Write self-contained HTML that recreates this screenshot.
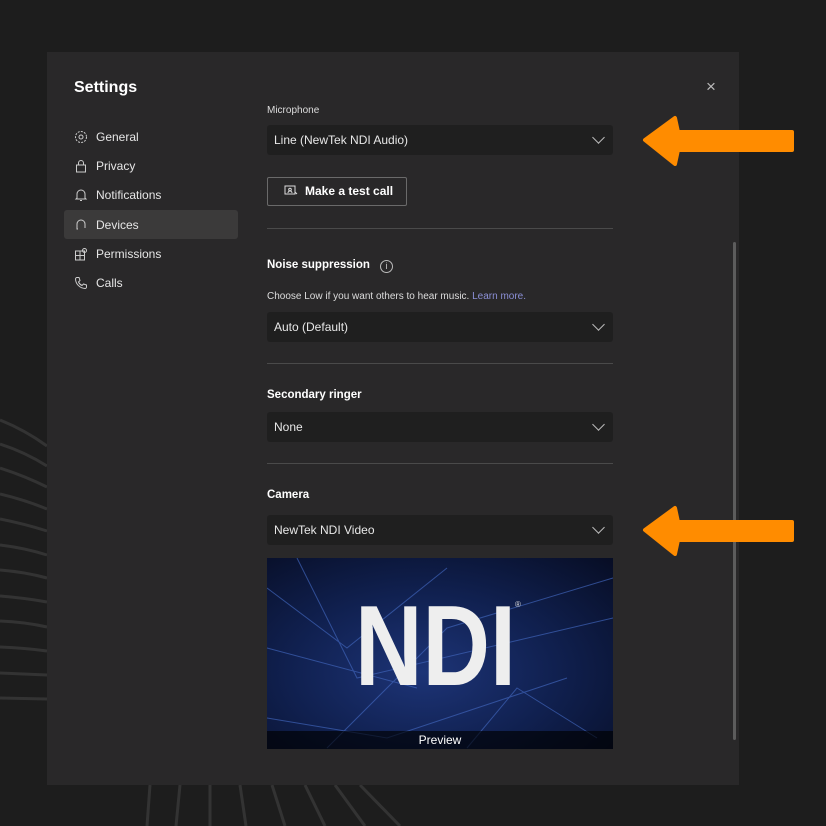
<!DOCTYPE html>
<html><head><meta charset="utf-8"><style>
*{margin:0;padding:0;box-sizing:border-box}
body{width:826px;height:826px;background:#1d1d1d;position:relative;overflow:hidden;font-family:"Liberation Sans",sans-serif;color:#fff}
.a{position:absolute}
#panel{left:47px;top:52px;width:692px;height:733px;background:#292829}
.nav{left:74px;font-size:12px;color:#e6e6e6;display:flex;align-items:center;gap:8px;height:29px}
.nav svg{width:14px;height:14px}
.dd{left:267px;width:346px;height:30px;background:#1f1f1f;border-radius:3px;font-size:12px;color:#e8e8e8;padding-left:7px;line-height:30px}
.dd:after{content:"";position:absolute;right:10px;top:8px;width:8px;height:8px;border-right:1px solid #bbb;border-bottom:1px solid #bbb;transform:rotate(45deg)}
.hr{left:267px;width:346px;height:1px;background:#4a4a4a}
.h{left:267px;font-size:11.5px;font-weight:bold;color:#fff}
</style></head><body>
<svg class="a" style="left:0;top:0" width="826" height="826">
<g stroke="#333" stroke-width="3" fill="none">
<path d="M0 420 Q25 430 47 446"/><path d="M0 444 Q25 452 47 466"/><path d="M0 468 Q25 476 47 487"/><path d="M0 494 Q25 500 47 509"/><path d="M0 519 Q25 524 47 531"/><path d="M0 545 Q25 548 47 555"/><path d="M0 570 Q25 572 47 578"/><path d="M0 596 Q25 598 47 602"/><path d="M0 621 Q25 622 47 627"/><path d="M0 647 Q25 648 47 651"/><path d="M0 673 L47 675"/><path d="M0 698 L47 699"/>
<path d="M150 785 L147 826"/><path d="M180 785 L176 826"/><path d="M210 785 L210 826"/><path d="M240 785 L246 826"/><path d="M272 785 L285 826"/><path d="M305 785 L325 826"/><path d="M335 785 L365 826"/><path d="M360 785 L400 826"/>
</g></svg>
<div class="a" id="panel"></div>
<div class="a" style="left:74px;top:79px;font-size:16px;font-weight:bold;color:#fff">Settings</div>
<div class="a" style="left:706px;top:77px;font-size:17px;color:#bbb">×</div>
<div class="a" style="left:64px;top:210px;width:174px;height:29px;background:#3b3a3a;border-radius:3px"></div>
<div class="a nav" style="top:122px"><svg viewBox="0 0 14 14" fill="none" stroke="#ccc"><circle cx="7" cy="7" r="2"/><circle cx="7" cy="7" r="5.5" stroke-dasharray="2 1.2"/></svg>General</div>
<div class="a nav" style="top:151px"><svg viewBox="0 0 14 14" fill="none" stroke="#ccc"><rect x="2.5" y="6" width="9" height="7"/><path d="M4.5 6V4a2.5 2.5 0 0 1 5 0v2"/></svg>Privacy</div>
<div class="a nav" style="top:180px"><svg viewBox="0 0 14 14" fill="none" stroke="#ccc"><path d="M3 10V6a4 4 0 0 1 8 0v4l1 1H2z M6 12.5h2"/></svg>Notifications</div>
<div class="a nav" style="top:210px"><svg viewBox="0 0 14 14" fill="none" stroke="#ccc"><path d="M3 9V6a4 4 0 0 1 8 0v3M3 8v3h1M11 8v2"/></svg>Devices</div>
<div class="a nav" style="top:239px"><svg viewBox="0 0 14 14" fill="none" stroke="#ccc"><rect x="1.5" y="4" width="9" height="9"/><path d="M6 4v9M1.5 8.5h9"/><circle cx="10.5" cy="3.5" r="2"/></svg>Permissions</div>
<div class="a nav" style="top:268px"><svg viewBox="0 0 14 14" fill="none" stroke="#ccc"><path d="M3 1.5l2 0 1 3-1.5 1.5a7 7 0 0 0 3.5 3.5L9.5 8l3 1v2a1.5 1.5 0 0 1-1.5 1.5A10 10 0 0 1 1.5 3 1.5 1.5 0 0 1 3 1.5z"/></svg>Calls</div>

<div class="a" style="left:267px;top:105px;font-size:10px;color:#ddd">Microphone</div>
<div class="a dd" style="top:125px">Line (NewTek NDI Audio)</div>
<div class="a" style="left:267px;top:177px;width:140px;height:29px;border:1px solid #6a6a6a;border-radius:2px;font-size:12px;font-weight:bold;line-height:27px;padding-left:37px">Make a test call</div>
<svg class="a" style="left:284px;top:185px" width="14" height="12" viewBox="0 0 14 12" fill="none" stroke="#ddd"><rect x="1" y="1" width="10" height="8"/><circle cx="6" cy="4.5" r="1.3"/><path d="M4 8a2 2 0 0 1 4 0M11 7l2 2"/></svg>
<div class="a hr" style="top:228px"></div>
<div class="a h" style="top:259px">Noise suppression</div>
<div class="a" style="left:380px;top:260px;width:13px;height:13px;border:1px solid #bbb;border-radius:50%;font-size:9px;text-align:center;line-height:11px;color:#ccc">i</div>
<div class="a" style="left:267px;top:291px;font-size:10px;color:#ddd">Choose Low if you want others to hear music. <span style="color:#8b8fd6">Learn more.</span></div>
<div class="a dd" style="top:312px">Auto (Default)</div>
<div class="a hr" style="top:363px"></div>
<div class="a h" style="top:389px">Secondary ringer</div>
<div class="a dd" style="top:412px">None</div>
<div class="a hr" style="top:463px"></div>
<div class="a h" style="top:489px">Camera</div>
<div class="a dd" style="top:515px">NewTek NDI Video</div>
<div class="a" style="left:267px;top:558px;width:346px;height:191px;overflow:hidden;background:radial-gradient(ellipse at 45% 60%,#1d3477 0%,#10204f 50%,#070d24 100%)">
<svg class="a" style="left:0;top:0" width="346" height="191"><g stroke="#3f63b8" stroke-width="1" fill="none" opacity=".7"><path d="M0 30 L80 90 L180 10"/><path d="M30 0 L90 120 L346 60"/><path d="M0 160 L120 180 L300 120"/><path d="M60 190 L180 70 L346 20"/><path d="M200 190 L250 130 L330 180"/><path d="M0 90 L150 130"/></g></svg>
<div class="a" style="left:88px;top:32px;font-size:114px;font-weight:bold;color:#eee;line-height:1;transform:scaleX(.82);transform-origin:left top">NDI</div>
<div class="a" style="left:248px;top:42px;font-size:8px;color:#ddd">®</div>
<div class="a" style="left:0;top:173px;width:346px;height:18px;background:rgba(0,0,0,.65);text-align:center;font-size:12px;line-height:18px">Preview</div>
</div>
<div class="a" style="left:733px;top:242px;width:3px;height:498px;background:#5c5c5c;border-radius:2px"></div>
<svg class="a" style="left:640px;top:114px" width="155" height="56"><path d="M5 26 L35 4 L38 18 L152 18 L152 36 L38 36 L35 50 Z" fill="#ff8c00" stroke="#ff8c00" stroke-linejoin="round" stroke-width="4"/></svg>
<svg class="a" style="left:640px;top:504px" width="155" height="56"><path d="M5 26 L35 4 L38 18 L152 18 L152 36 L38 36 L35 50 Z" fill="#ff8c00" stroke="#ff8c00" stroke-linejoin="round" stroke-width="4"/></svg>
</body></html>
